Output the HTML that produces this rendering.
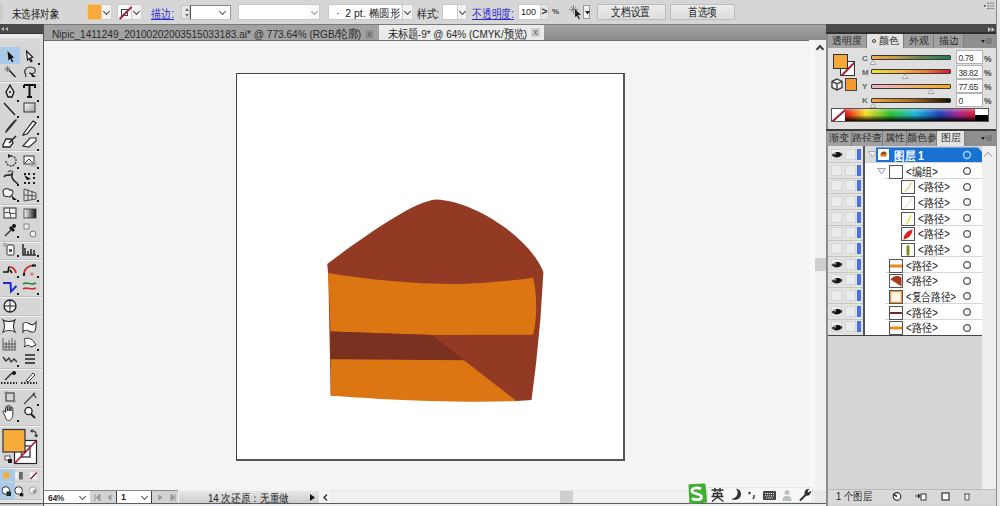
<!DOCTYPE html>
<html><head><meta charset="utf-8">
<style>
*{margin:0;padding:0;box-sizing:border-box}
html,body{width:1000px;height:506px;overflow:hidden;background:#d6d6d6;font-family:"Liberation Sans",sans-serif;font-size:11px;color:#222}
.a{position:absolute}
#top{left:0;top:0;width:1000px;height:24px;background:#d6d6d6}
#tools{left:0;top:24px;width:44px;height:482px;background:#d6d6d6}
#tabs{left:44px;top:24px;width:782px;height:17px;background:linear-gradient(#7a7a7a 0,#7a7a7a 1px,#a2a2a2 1px,#8a8a8a 16px,#6e6e6e 16px)}
#canvas{left:44px;top:41px;width:771px;height:449px;background:#f4f4f4}
#vscroll{left:815px;top:40px;width:11px;height:450px;background:#f0f0f0}
#bottom{left:44px;top:490px;width:782px;height:14px;background:#f0f0f0}
#panel{left:0;top:0;width:0;height:0}
#rstrip{left:996px;top:0;width:4px;height:506px;background:#e6e9ec;border-left:1.2px solid #8a8a8a}
.dd{background:#f2f2f2;border:1px solid #cfcfcf;border-left:none}
.dd:after{content:"";position:absolute;left:2px;top:4px;width:4px;height:4px;border-right:1.5px solid #444;border-bottom:1.5px solid #444;transform:rotate(45deg)}
.chev{width:5px;height:5px;border-right:1.5px solid #555;border-bottom:1.5px solid #555;transform:rotate(45deg)}
.lnk{font-size:12px;color:#2a2ad0}
.lnk span{text-decoration:underline}
.btn{height:16px;background:linear-gradient(#ececec,#dcdcdc);border:1px solid #bdbdbd;text-align:center;font-size:12px;line-height:14px;color:#222}
.xb{width:9px;height:9px;font-size:9px;line-height:9px;text-align:center;color:#555}
.xb:after{content:"x"}
.ptab{height:14px;background:#a0a0a0;border-right:1px solid #7e7e7e;font-size:10px;color:#2a2a2a;text-align:center;line-height:14px;white-space:nowrap;overflow:hidden}
.ptab.act{background:#e4e4e4}
.cell{width:11px;height:11px;background:#ebebeb;border:1px solid #d6d6d6}
.slab{font-size:8px;color:#666;font-weight:bold}
.sbar{width:80px;height:5px;border:1px solid #3a3a3a;border-radius:1px}
.sinp{width:27px;height:14px;background:#fff;border:1px solid #b4b4b4;font-size:8.5px;color:#333;padding:2px 0 0 2px;letter-spacing:-0.4px;overflow:hidden;white-space:nowrap}
.spct{font-size:8.5px;color:#444;font-weight:bold}
.cj{display:inline-block;width:1em;text-align:center}
.tofu .cj{position:relative;top:0.06em;transform:scale(1.4,1.12)}
</style></head><body>
<div id="top" class="a">
 <div class="a" style="left:0;top:4px;width:3px;height:16px;background:#cbcbcb"></div>
 <div class="a" style="left:12px;top:6px;font-size:12px;color:#1a1a1a"><span class="fit" style="--w:47px">未选择对象</span></div>
 <div class="a" style="left:87px;top:4px;width:15px;height:16px;background:#f7ab3c;border:1px solid #f0c890"></div>
 <div class="a dd" style="left:102px;top:4px;width:10px;height:16px"></div>
 <div class="a" style="left:117px;top:4px;width:15px;height:16px;background:#fafafa;border:1px solid #ccc">
   <div class="a" style="left:3px;top:4px;width:7px;height:7px;border:1px solid #444"></div>
   <div class="a" style="left:-1px;top:7px;width:17px;height:1.5px;background:#9a1c3c;transform:rotate(-45deg)"></div>
 </div>
 <div class="a dd" style="left:132px;top:4px;width:10px;height:16px"></div>
 <div class="a lnk" style="left:151px;top:6px"><span class="fit" style="--w:23px">描边:</span></div>
 <div class="a" style="left:181px;top:5px;width:9px;height:14px;background:#e8e8e8;border:1px solid #c8c8c8;"><svg class="a" style="left:2.5px;top:2px" width="4" height="3"><path d="M0,3 L2,0 L4,3 Z" fill="#777"/></svg><svg class="a" style="left:2.5px;top:8px" width="4" height="3"><path d="M0,0 L2,3 L4,0 Z" fill="#777"/></svg></div>
 <div class="a" style="left:190px;top:5px;width:41px;height:14.5px;background:#fff;border:1px solid #c4c4c4;border-left:1px solid #555;border-top-color:#888;border-right-color:#999"></div>
 <div class="a chev" style="left:220px;top:8.5px"></div>
 <div class="a" style="left:238px;top:4px;width:82px;height:16px;background:#fff;border:1px solid #c8c8c8"></div>
 <div class="a dd" style="left:310px;top:4px;width:10px;height:16px;opacity:.5"></div>
 <div class="a" style="left:328px;top:4px;width:75px;height:16px;background:#fff;border:1px solid #c8c8c8;font-size:11px;padding:1px 0 0 7px;white-space:nowrap;color:#222"><span class="fit" style="--w:64px">·&nbsp;&nbsp;2 pt. 椭圆形</span></div>
 <div class="a dd" style="left:403px;top:4px;width:10px;height:16px"></div>
 <div class="a" style="left:417px;top:6px;font-size:12px;color:#222"><span class="fit" style="--w:22px">样式:</span></div>
 <div class="a" style="left:442px;top:4px;width:16px;height:16px;background:#fff;border:1px solid #c8c8c8"></div>
 <div class="a dd" style="left:458px;top:4px;width:9px;height:16px"></div>
 <div class="a lnk" style="left:472px;top:6px"><span class="fit" style="--w:42px">不透明度:</span></div>
 <div class="a" style="left:518px;top:4px;width:23px;height:16px;background:#fff;border:1px solid #c8c8c8;font-size:9px;padding:2px 0 0 2px">100</div>
 <div class="a" style="left:540px;top:4px;width:9px;height:16px;background:#e4e4e4;border:1px solid #c8c8c8;font-size:10px;text-align:center;line-height:14px;font-weight:bold;color:#333">&gt;</div>
 <div class="a" style="left:552px;top:7px;font-size:8px;font-weight:bold;color:#444">%</div>
 <svg class="a" style="left:568px;top:4px" width="16" height="16" viewBox="0 0 16 16"><path d="M3,3 L8,7 M8,3 L3,8 M1,5.5 L10,5.5 M5.5,1 L5.5,10" stroke="#888" stroke-width="1"/><path d="M7,5 L13,11 L10,11 L12,15 L11,15.5 L9,12 L7,13 Z" fill="#222"/></svg>
 <div class="a" style="left:583px;top:5px;width:7px;height:14px;background:#f4f4f4;border:1px solid #999;"><svg class="a" style="left:1px;top:5px" width="5" height="4"><path d="M0,0 L2.5,3.5 L5,0 Z" fill="#222"/></svg></div>
 <div class="a btn" style="left:597px;top:4px;width:69px;text-align:left;padding-left:13px"><span class="fit" style="--w:39px">文档设置</span></div>
 <div class="a btn" style="left:670px;top:4px;width:65px;text-align:left;padding-left:17px"><span class="fit" style="--w:29px">首选项</span></div>
 <svg class="a" style="left:984px;top:1px" width="12" height="9"><rect x="0" y="4" width="1.6" height="1.6" fill="#444"/><path d="M3,2.2 L10,2.2 M3,5 L10,5 M3,7.6 L10,7.6" stroke="#777" stroke-width="1" stroke-dasharray="2,0.6"/></svg>
</div>
<div id="tools" class="a">
<svg class="a" style="left:0;top:0" width="44" height="482" viewBox="0 24 44 482">
<rect x="0" y="24" width="44" height="10" fill="#4a4a4a"/>
<rect x="0" y="33" width="44" height="1" fill="#333"/>
<path d="M4,27 L1,29 L4,31 Z M8,27 L5,29 L8,31 Z" fill="#bbb"/>
<rect x="0" y="34" width="43" height="4" fill="#ececec"/>
<rect x="0" y="38" width="43" height="3" fill="#dadada"/>
<rect x="40" y="34" width="3" height="472" fill="#dedede"/>
<rect x="43" y="24" width="1" height="482" fill="#555"/>
<g fill="#c2c2c2">
<rect x="0" y="81" width="42" height="1"/><rect x="0" y="150" width="42" height="1"/><rect x="0" y="204" width="42" height="1"/>
<rect x="0" y="241" width="42" height="1"/><rect x="0" y="259" width="42" height="1"/><rect x="0" y="296" width="42" height="1"/>
<rect x="0" y="315" width="42" height="1"/><rect x="0" y="368" width="42" height="1"/><rect x="0" y="388" width="42" height="1"/>
<rect x="0" y="425" width="42" height="1"/><rect x="0" y="467" width="42" height="1"/><rect x="0" y="481.8" width="42" height="1"/>
</g>
<g fill="#f0f0f0">
<rect x="0" y="82" width="42" height="1"/><rect x="0" y="151" width="42" height="1"/><rect x="0" y="205" width="42" height="1"/>
<rect x="0" y="242" width="42" height="1"/><rect x="0" y="260" width="42" height="1"/><rect x="0" y="297" width="42" height="1"/>
<rect x="0" y="316" width="42" height="1"/><rect x="0" y="369" width="42" height="1"/><rect x="0" y="389" width="42" height="1"/>
<rect x="0" y="426" width="42" height="1"/><rect x="0" y="468" width="42" height="1"/><rect x="0" y="482.8" width="42" height="0.8"/>
</g>
<rect x="0" y="47" width="20" height="17" fill="#a9cbe9"/>
<g fill="#1a1a1a">
<!-- flyout dots -->
<rect x="17" y="100" width="2" height="2"/><rect x="37" y="100" width="2" height="2"/>
<rect x="17" y="116" width="2" height="2"/><rect x="37" y="116" width="2" height="2"/>
<rect x="37" y="133" width="2" height="2"/><rect x="37" y="149" width="2" height="2"/>
<rect x="38" y="63" width="2" height="2"/>
<rect x="17" y="167" width="2" height="2"/><rect x="37" y="167" width="2" height="2"/>
<rect x="17" y="184" width="2" height="2"/><rect x="17" y="200" width="2" height="2"/><rect x="37" y="200" width="2" height="2"/>
<rect x="17" y="236" width="2" height="2"/><rect x="17" y="255" width="2" height="2"/><rect x="37" y="255" width="2" height="2"/>
<rect x="17" y="276" width="2" height="2"/><rect x="37" y="276" width="2" height="2"/><rect x="17" y="293" width="2" height="2"/><rect x="37" y="293" width="2" height="2"/>
<rect x="37" y="349" width="2" height="2"/><rect x="17" y="365" width="2" height="2"/>
<rect x="37" y="404" width="2" height="2"/><rect x="17" y="420" width="2" height="2"/>
</g>
<!-- select -->
<path d="M7.5,51 L8.5,60.5 L10.3,58.8 L12,62.3 L13.3,61.6 L11.6,58.2 L14,57.6 Z" fill="#111"/>
<path d="M26.5,51 L27.5,60 L29.2,58.4 L30.8,61.8 L32,61.2 L30.5,57.8 L32.8,57.3 Z" fill="#fff" stroke="#111" stroke-width="1.1"/>
<!-- magic wand -->
<path d="M9,70 L15.5,77" stroke="#222" stroke-width="1.5"/><path d="M4.5,69 L10.5,69 M7.5,66 L7.5,72 M5.5,67 L9.5,71 M9.5,67 L5.5,71" stroke="#666" stroke-width="0.8"/>
<!-- lasso -->
<path d="M26,75 C23,71 26,67 30,67 C34,67 36,69 35,72 C34,74 31,74 29,73 M26,75 L25.5,77" fill="none" stroke="#333" stroke-width="1.2"/>
<path d="M30,72 L36,77 L32,77 Z" fill="#222"/>
<!-- pen -->
<path d="M10,85 L6,92 L8,97 L12,97 L14,92 Z" fill="#ddd" stroke="#111" stroke-width="1.3"/><circle cx="10" cy="92" r="1" fill="#111"/>
<!-- T -->
<path d="M24,85 L35,85 L35,88 M24,85 L24,88 M29.5,85 L29.5,97 M27,97 L32,97" fill="none" stroke="#111" stroke-width="2"/>
<!-- line -->
<path d="M4,103 L15,115" stroke="#222" stroke-width="1.5"/>
<!-- rect -->
<rect x="24" y="103" width="11" height="9" fill="url(#gr1)" stroke="#333" stroke-width="1"/>
<defs><linearGradient id="gr1" x1="0" y1="0" x2="1" y2="1"><stop offset="0" stop-color="#fff"/><stop offset="1" stop-color="#999"/></linearGradient>
<linearGradient id="gr2" x1="0" y1="0" x2="1" y2="0"><stop offset="0" stop-color="#fff"/><stop offset="1" stop-color="#111"/></linearGradient></defs>
<!-- brush -->
<path d="M5,132 C7,128 12,122 16,119 L17,120 C14,124 9,130 6,133 Z" fill="#333"/>
<path d="M24,133 L33,121 L36,123 L27,134 L23,135 Z" fill="#fff" stroke="#222" stroke-width="1.2"/>
<!-- blob -->
<path d="M3,145 L6,139 L11,139 L13,143 L10,147 L3,147 Z" fill="#fff" stroke="#222" stroke-width="1.3"/><path d="M9,143 L16,136" stroke="#222" stroke-width="1.6"/>
<!-- eraser -->
<path d="M23,146 L30,138 L36,138 L36,141 L29,147 Z" fill="#fff" stroke="#333" stroke-width="1.2"/>
<!-- rotate -->
<path d="M6,161 A5,5 0 1 0 10,156" fill="none" stroke="#555" stroke-width="1.6" stroke-dasharray="2,1"/><path d="M8,154 L12,156 L8,158 Z" fill="#222"/>
<!-- scale -->
<rect x="24" y="156" width="10" height="8" fill="#f4f4f4" stroke="#333"/><path d="M25,163 L29,159 L33,163" fill="none" stroke="#333"/><rect x="31" y="162" width="5" height="4" fill="none" stroke="#aaa"/>
<!-- warp -->
<path d="M4,177 C6,173 9,177 12,174 C11,179 14,181 18,184" fill="none" stroke="#333" stroke-width="1.8"/><path d="M8,172 C10,170 12,171 13,172" fill="none" stroke="#555" stroke-width="1.3"/>
<!-- free transform -->
<g fill="#222"><rect x="24" y="173" width="2" height="2"/><rect x="28" y="173" width="2" height="2"/><rect x="33" y="173" width="2" height="2"/><rect x="33" y="177" width="2" height="2"/><rect x="33" y="182" width="2" height="2"/><rect x="28" y="182" width="2" height="2"/><rect x="24" y="182" width="2" height="2"/></g><path d="M24,175 L31,179 L27,180 Z" fill="#111"/>
<!-- shape builder -->
<path d="M3,192 C3,188 8,188 10,190 C13,189 14,193 12,195 L10,197 L4,196 Z" fill="#f4f4f4" stroke="#333" stroke-width="1.1"/><path d="M11,195 L17,200 L13,200 Z" fill="#222"/>
<!-- perspective grid -->
<path d="M24,189 L24,201 L36,199 L36,193 Z M28,189.5 L28,200.5 M32,191 L32,199.8 M24,195 L36,196" fill="#ddd" stroke="#444" stroke-width="0.9"/>
<!-- mesh -->
<rect x="4" y="208" width="12" height="10" fill="#f0f0f0" stroke="#333"/><path d="M4,213 C8,211 12,215 16,213 M10,208 C8,212 12,214 10,218" fill="none" stroke="#444"/>
<!-- gradient -->
<rect x="24" y="209" width="12" height="9" fill="url(#gr2)" stroke="#333" stroke-width="0.8"/>
<!-- eyedropper -->
<path d="M5,236 L12,229" stroke="#333" stroke-width="1.4"/><path d="M11,226 L15,230 L13,232 L9,228 Z" fill="#111"/><circle cx="14" cy="226" r="2" fill="#111"/>
<!-- blend -->
<rect x="24" y="224" width="5" height="5" fill="#eee" stroke="#888"/><circle cx="33" cy="234" r="3" fill="#eee" stroke="#777"/>
<!-- symbol sprayer -->
<rect x="7" y="245" width="7" height="10" rx="1" fill="#fff" stroke="#333"/><path d="M3,245 L6,246 M3,243 L7,244" stroke="#777" stroke-width="0.8"/><rect x="9" y="249" width="3" height="3" fill="#555"/>
<!-- graph -->
<path d="M23,244 L23,255 L36,255 M25,255 L25,248 M28,255 L28,251 M31,255 L31,249 M34,255 L34,250" fill="none" stroke="#333" stroke-width="1.6"/>
<!-- width tool -->
<path d="M9.5,267 C12,267 15,269 16,273" fill="none" stroke="#d03030" stroke-width="1.8"/><path d="M3,272 L8,272 L9,266.5 M10,270 L12,273" fill="none" stroke="#111" stroke-width="1.6"/>
<!-- red curve -->
<path d="M24,275 C24,269 28,265.5 34,265.5" fill="none" stroke="#d03030" stroke-width="1.8"/><path d="M32,265.5 L36,265.5 M24,273 L24,276" stroke="#111" stroke-width="1.8"/><path d="M32,272 L32,276 M30,274 L34,274" stroke="#e05a5a" stroke-width="0.9"/>
<!-- blue Z -->
<path d="M3,283 L10.5,283 L11,291.5 L16.5,286" fill="none" stroke="#1a2ad8" stroke-width="2"/>
<!-- green/red waves -->
<path d="M23,284 C27,281 31,286 36,283" fill="none" stroke="#2a8a3a" stroke-width="1.6"/><path d="M23,289 C27,286 31,291 36,288" fill="none" stroke="#c83434" stroke-width="1.6"/>
<!-- circle crosshair -->
<circle cx="10" cy="306" r="6" fill="#f4f4f4" stroke="#222" stroke-width="1.3"/><path d="M4,306 L16,306 M10,300 L10,312" stroke="#222" stroke-width="1"/>
<!-- envelope -->
<path d="M3,320 C6,322 12,322 15,320 C13,324 13,328 15,332 C12,330 6,330 3,332 C5,328 5,324 3,320 Z" fill="#fff" stroke="#333" stroke-width="1.1"/>
<path d="M23,324 C27,318 31,330 36,322 C36,327 36,329 35,331 C31,336 27,326 23,332 Z" fill="#fff" stroke="#333" stroke-width="1.1"/>
<!-- grid chart -->
<path d="M3,338 L3,350 L16,350 M6,350 L6,342 M9,350 L9,340 M12,350 L12,338 M15,350 L15,340 M3,344 L16,344 M3,347 L16,347" fill="none" stroke="#444" stroke-width="0.8"/>
<!-- puppet -->
<path d="M24,339 C28,337 32,339 34,342 L36,345 L31,347 L28,345 L24,347 C26,344 25,341 24,339 Z" fill="#fff" stroke="#333" stroke-width="1"/>
<!-- wavy -->
<path d="M3,357 L6,361 L9,358 L11,362 L14,359 L17,362" fill="none" stroke="#333" stroke-width="1.3"/>
<!-- list -->
<path d="M25,355 L35,355 M25,359 L35,359 M25,363 L35,363" stroke="#222" stroke-width="1.6"/>
<!-- eyedropper bars -->
<path d="M5,380 L12,373" stroke="#333" stroke-width="1.5"/><circle cx="14" cy="373" r="2" fill="#111"/><path d="M1,383 L17,383" stroke="#222" stroke-width="2" stroke-dasharray="1.5,1.5"/>
<path d="M26,381 L33,373 L35,375 L28,382 Z" fill="#fff" stroke="#333"/><path d="M21,383 L37,383" stroke="#222" stroke-width="2" stroke-dasharray="1.5,1.5"/>
<!-- artboard -->
<rect x="6" y="393" width="8" height="8" fill="none" stroke="#444" stroke-width="1.2"/><path d="M6,391 L6,393 M14,401 L14,403 M4,393 L6,393 M14,401 L16,401" stroke="#888"/>
<!-- slice -->
<path d="M24,404 L35,393 M28,400 L32,396 M33,393 L36,398" fill="none" stroke="#444" stroke-width="1.3"/>
<!-- hand -->
<path d="M5,416 L3,412 C2.5,411 3.5,410 4.5,411 L5.5,412.5 L5.5,407.5 C5.5,406.3 7.3,406.3 7.3,407.5 L7.3,411 L7.3,406.3 C7.3,405 9.2,405 9.2,406.3 L9.2,411 L9.2,406.8 C9.2,405.6 11,405.6 11,406.8 L11,411 L11,408.2 C11,407 12.8,407 12.8,408.2 L12.8,414 C12.8,418 11,420.5 8.5,420.5 C6.5,420.5 5.8,418.5 5,416 Z" fill="#fff" stroke="#222" stroke-width="0.9"/>
<!-- zoom -->
<circle cx="28.5" cy="411" r="3.6" fill="#fff" stroke="#222" stroke-width="1.3"/><path d="M31,414 L35,418" stroke="#222" stroke-width="2"/>
<!-- fill/stroke -->
<path d="M31.5,431 C34.5,430.5 36,432 36.2,435" fill="none" stroke="#333" stroke-width="1.2"/><path d="M30,431 L32.5,429 L32.5,433 Z M36.2,437.5 L34,435 L38.4,435 Z" fill="#333"/>
<rect x="14.5" y="440.5" width="22" height="23" fill="#fff" stroke="#222" stroke-width="1.2"/>
<rect x="21.5" y="446" width="8.5" height="11" fill="none" stroke="#555" stroke-width="1.6"/>
<path d="M15,463 L36,441" stroke="#b01c40" stroke-width="1.8"/>
<rect x="3" y="429.5" width="22" height="22.5" fill="#f7ac3b" stroke="#333" stroke-width="1.2"/>
<rect x="5" y="456" width="5" height="4" fill="#fff" stroke="#333" stroke-width="0.8"/><rect x="8" y="459" width="4" height="4" fill="#222"/>
<rect x="0" y="469" width="15" height="12.5" fill="#a9cbe9"/>
<rect x="3" y="472.3" width="6.3" height="6.3" rx="1" fill="#f7ac3b"/>
<rect x="15.5" y="472" width="7.5" height="7.5" fill="url(#gr3)"/>
<rect x="29.7" y="472" width="7.7" height="7.5" fill="#fff" stroke="#e0c8d0" stroke-width="0.5"/><path d="M30.5,479 L36.8,472.5" stroke="#7a1838" stroke-width="1.5"/>
<rect x="0" y="482.5" width="15" height="16.5" fill="#a9cbe9"/>
<circle cx="5.8" cy="490.5" r="3.8" fill="#fff" stroke="#333" stroke-width="1"/><rect x="6.5" y="491.5" width="4.5" height="4.5" fill="#1e2e2e"/>
<circle cx="18.6" cy="490.5" r="3.8" fill="#fff" stroke="#333" stroke-width="1"/><path d="M20.5,493 L23.5,493.5 L23,496.5 L19.5,496 Z" fill="#111"/>
<circle cx="32.8" cy="490.5" r="3.6" fill="#f0f0f0" stroke="#aaa" stroke-width="1"/><path d="M32.8,490.5 L36,489 A3.6,3.6 0 0 1 33,494 Z" fill="#999"/>
<rect x="0" y="499" width="42" height="1" fill="#c2c2c2"/><rect x="0" y="500" width="43" height="3" fill="#e6e6e6"/><rect x="0" y="503" width="44" height="1.2" fill="#555"/>
<defs><linearGradient id="gr3" x1="0" y1="0" x2="1" y2="0"><stop offset="0" stop-color="#fff"/><stop offset="0.45" stop-color="#ddd"/><stop offset="0.55" stop-color="#555"/><stop offset="1" stop-color="#888"/></linearGradient></defs>
</svg>
</div>
<div id="tabs" class="a">
 <div class="a" style="left:0;top:1px;width:335px;height:15px;background:#a2a2a2;font-size:11.5px;color:#2a2a2a;padding:2px 0 0 8px;white-space:nowrap;overflow:hidden"><span class="fit" style="--w:309px">Nipic_1411249_20100202003515033183.ai* @ 773.64% (RGB/轮廓)</span></div>
 <div class="a xb" style="left:321px;top:6px;background:#939393"></div>
 <div class="a" style="left:335px;top:1px;width:165px;height:15px;background:#ebebeb;font-size:11.5px;color:#2a2a2a;padding:2px 0 0 9px;white-space:nowrap;overflow:hidden"><span class="fit" style="--w:139px">未标题-9* @ 64% (CMYK/预览)</span></div>
 <div class="a xb" style="left:487px;top:4px;background:#cfcfcf"></div>
</div>
<div id="canvas" class="a">
  <div class="a" style="left:192px;top:32px;width:389px;height:388px;background:#fff;border:1px solid #464646;border-right:2px solid #555;border-bottom:2px solid #555"></div>
</div>
<svg class="a" style="left:0;top:0" width="1000" height="506" viewBox="0 0 1000 506">
<path fill="#933a25" d="M327.2,264 C370,232 415,201 436,199.5 C475,201 530,238 543.4,272 L540.4,319 L536,364 L531.5,400 L517,401 L330.7,395.6 L328.3,274 Z"/>
<path fill="#dc7613" d="M328.3,273 C370,280 420,284.5 460,284 C495,283 520,279.5 533,277.8 C537,292 537.5,318 533,334.7 L433,334.9 L330.5,331.6 Z"/>
<path fill="#7b3120" d="M330.5,331.6 L431.9,334.9 L464,360.2 L330.6,359.3 Z"/>
<path fill="#dc7613" d="M330.6,359.3 L464,360.2 L516.7,401.2 C470,402.5 420,401 380,399 C355,397.5 340,396.5 330.7,395.6 Z"/>
</svg>
<div id="vscroll" class="a">
 <div class="a" style="left:2px;top:6px;width:6px;height:6px;border-left:2px solid #444;border-top:2px solid #444;transform:rotate(45deg)"></div>
 <div class="a" style="left:0;top:218px;width:11px;height:13px;background:#cfcfcf"></div>
</div>
<div class="a" style="left:809px;top:40px;width:6px;height:450px;background:#f7f7f7"></div>
<div id="bottom" class="a">
 <div class="a" style="left:0;top:0;width:134px;height:1px;background:#8a8a8a"></div><div class="a" style="left:286px;top:0;width:485px;height:1px;background:#e6e6e6"></div>
 <div class="a" style="left:0;top:12.5px;width:782px;height:1.2px;background:#5e5e5e"></div>
 <div class="a" style="left:0;top:1px;width:46px;height:12px;background:#fff;font-size:8.5px;font-weight:bold;color:#333;padding:2px 0 0 4px;letter-spacing:-0.3px">64%</div>
 <div class="a chev" style="left:36px;top:4px;border-color:#555;width:5px;height:5px"></div>
 <div class="a" style="left:46px;top:1px;width:26px;height:12px;background:#d2d2d2"></div>
 <svg class="a" style="left:48px;top:3px" width="24" height="9"><path d="M3,1 L3,8 M8,1 L4.5,4.5 L8,8 Z M19,2 L16,4.5 L19,7 Z" stroke="#999" fill="#999" stroke-width="1"/></svg>
 <div class="a" style="left:72px;top:1px;width:36px;height:12px;background:#fff;border-left:1px solid #444;border-right:1px solid #444;font-size:9px;font-weight:bold;color:#222;padding:1px 0 0 4px">1</div>
 <div class="a chev" style="left:98px;top:4px;border-color:#555;width:5px;height:5px"></div>
 <div class="a" style="left:108px;top:1px;width:26px;height:12px;background:#d2d2d2"></div>
 <svg class="a" style="left:110px;top:3px" width="24" height="9"><path d="M5,2 L8,4.5 L5,7 Z M17,1 L20.5,4.5 L17,8 Z M21,1 L21,8" stroke="#999" fill="#999" stroke-width="1"/></svg>
 <div class="a" style="left:134px;top:1px;width:141px;height:12px;background:linear-gradient(#e6e6e6,#cdcdcd);border-left:1px solid #f6f6f6"></div>
 <div class="a" style="left:164px;top:1px;font-size:11px;color:#1a1a1a;white-space:nowrap"><span class="fit" style="--w:81px">14 次还原：无重做</span></div>
 <svg class="a" style="left:265px;top:3px" width="7" height="9"><path d="M1,1 L6,4.5 L1,8 Z" fill="#111"/></svg>
 <div class="a" style="left:275px;top:1px;width:11px;height:12px;background:#f4f4f4"></div>
 <svg class="a" style="left:278px;top:3px" width="7" height="9"><path d="M5,1.5 L2,4.5 L5,7.5" stroke="#333" stroke-width="1.4" fill="none"/></svg>
 <div class="a" style="left:286px;top:1px;width:485px;height:12px;background:#f0f0f0"></div>
 <div class="a" style="left:516px;top:1px;width:13px;height:12px;background:#cfcfcf"></div>
 <div class="a" style="left:771px;top:1px;width:11px;height:12px;background:#e8e8e8"></div>
</div>
<div class="a" style="left:44px;top:504px;width:782px;height:2px;background:#eef1f4"></div>
<!-- sogou ime -->
<div class="a" style="left:707px;top:487px;width:106px;height:16px;background:#f7f7f7;border:1px solid #e4e4e4"></div>
<svg class="a" style="left:684px;top:483px" width="130" height="23" viewBox="684 483 130 23">
 <path d="M688.5,485.5 Q688,484.5 689.5,484.3 L704,483.6 Q705.5,483.5 705.6,485 L707,501 Q707.2,502.5 705.7,502.7 L691,504 Q689.5,504.2 689.4,502.7 Z" fill="#3fae33"/>
 <path d="M701,489 C697,487 691,488 692,491.5 C693,494 701,493.5 701.5,497 C702,500 695,500.5 692,498.5" fill="none" stroke="#fff" stroke-width="2.8"/>
 <path d="M711.5,490 L723.5,490 M715,488 L715,492 M720,488 L720,492 M713.5,497 L713.5,493.5 L721.5,493.5 L721.5,497 M711.5,496.5 L723.5,496.5 M717.5,491.5 L717.5,497 M717.5,497 L712,501.5 M717.5,497 L723.5,501.5" stroke="#333" stroke-width="1.5" fill="none"/>
 <path d="M736,488.5 C739,492 738,498 731,499 C735,501 741,499.5 741,494 C741,491 739,489 736,488.5 Z" fill="#333"/>
 <circle cx="749.5" cy="493" r="1.2" fill="#333"/><path d="M754,495 L754,497 L753,499" stroke="#333" stroke-width="1.4" fill="none"/>
 <rect x="763" y="491" width="13" height="9" rx="1" fill="#444"/><path d="M765,493.5 L774,493.5 M765,495.8 L774,495.8 M766,498 L773,498" stroke="#f0f0f0" stroke-width="1" stroke-dasharray="1.2,0.8"/>
 <circle cx="787" cy="492.5" r="2.5" fill="#b8c4bc"/><path d="M782.5,501 C782.5,497 784,496 787,496 C790,496 791.5,497 791.5,501 Z" fill="#b8c4bc"/>
 <path d="M800,500.5 L805.5,495" stroke="#333" stroke-width="2"/><path d="M805,495.5 C803.5,492 805.5,488.5 809.5,488.8 L807.5,491.2 L808.8,492.5 L811,490.5 C811.3,494.5 808.5,496.5 805,495.5 Z" fill="#333"/>
</svg>
<div id="panel" class="a">
 <div class="a" style="left:826px;top:24px;width:170px;height:10px;background:linear-gradient(#4a4a4a 80%,#2e2e2e 80%)"></div>
 <svg class="a" style="left:987.5px;top:27px" width="7" height="5"><path d="M0,0 L3,2.5 L0,5 Z M3.5,0 L6.5,2.5 L3.5,5 Z" fill="#ccc"/></svg>
 <div class="a" style="left:826px;top:34px;width:170px;height:14px;background:#8f8f8f"></div>
 <div class="a ptab" style="left:827px;top:34px;width:40px">透明度</div>
 <div class="a ptab act" style="left:867px;top:34px;width:37px"><span style="display:inline-block;width:4px;height:4px;border:1px solid #444;border-radius:50%;margin-right:3px;vertical-align:1px"></span>颜色</div>
 <div class="a ptab" style="left:904px;top:34px;width:30px">外观</div>
 <div class="a ptab" style="left:934px;top:34px;width:30px">描边</div>
 <svg class="a" style="left:981px;top:40px" width="4" height="3"><path d="M0,0 L4,0 L2,3 Z" fill="#222"/></svg><div class="a" style="left:986px;top:38px;width:6px;height:6px;background:#7a7a7a"></div>
 <div class="a" style="left:826px;top:48px;width:170px;height:80.5px;background:#dfdfdf"></div>
 <div class="a" style="left:826px;top:34px;width:1.5px;height:472px;background:#8c8c8c"></div>
 <!-- swatches -->
 <div class="a" style="left:840px;top:61px;width:15px;height:15px;background:#fff;border:1px solid #333;overflow:hidden"><div class="a" style="left:-3px;top:6px;width:20px;height:1.6px;background:#a8183a;transform:rotate(-45deg)"></div></div>
 <div class="a" style="left:832.5px;top:54px;width:15px;height:15px;background:#f5a93a;border:1px solid #333"></div>
 <svg class="a" style="left:831px;top:78px" width="12" height="13" viewBox="0 0 12 13"><path d="M6,1 L11,3.5 L11,9.5 L6,12 L1,9.5 L1,3.5 Z M1,3.5 L6,6 L11,3.5 M6,6 L6,12" fill="#f4f4f4" stroke="#333" stroke-width="1.3"/></svg>
 <div class="a" style="left:845px;top:78px;width:12px;height:13px;background:#f29a30;border:1px solid #444"></div>
 <!-- sliders -->
 <div class="a slab" style="left:862px;top:53.5px">C</div>
 <div class="a sbar" style="left:871px;top:55px;background:linear-gradient(90deg,#f2a84a,#c49a48 30%,#7a8a50 55%,#1a7a50)"></div>
 <svg class="a" style="left:869px;top:60px" width="8" height="5"><path d="M1,4.5 L4,0.5 L7,4.5 Z" fill="#eee" stroke="#999" stroke-width="0.8"/></svg>
 <div class="a sinp" style="left:955.5px;top:50px">0.78</div><div class="a spct" style="left:984px;top:53.5px">%</div>
 <div class="a slab" style="left:862px;top:67.5px">M</div>
 <div class="a sbar" style="left:871px;top:69px;background:linear-gradient(90deg,#f0e040,#f4b040 40%,#ec7a30 70%,#d81a3a)"></div>
 <svg class="a" style="left:901px;top:74px" width="8" height="5"><path d="M1,4.5 L4,0.5 L7,4.5 Z" fill="#eee" stroke="#999" stroke-width="0.8"/></svg>
 <div class="a sinp" style="left:955.5px;top:64.5px">38.82</div><div class="a spct" style="left:984px;top:67.5px">%</div>
 <div class="a slab" style="left:862px;top:82px">Y</div>
 <div class="a sbar" style="left:871px;top:83.5px;background:linear-gradient(90deg,#f4b0c8,#f4b090 40%,#f4ae50 70%,#f2aa20)"></div>
 <svg class="a" style="left:927px;top:88.5px" width="8" height="5"><path d="M1,4.5 L4,0.5 L7,4.5 Z" fill="#eee" stroke="#999" stroke-width="0.8"/></svg>
 <div class="a sinp" style="left:955.5px;top:78.5px">77.65</div><div class="a spct" style="left:984px;top:81.5px">%</div>
 <div class="a slab" style="left:862px;top:96px">K</div>
 <div class="a sbar" style="left:871px;top:97.5px;background:linear-gradient(90deg,#f5aa40,#b06a20 50%,#4a2a08 85%,#111)"></div>
 <svg class="a" style="left:869px;top:102.5px" width="8" height="5"><path d="M1,4.5 L4,0.5 L7,4.5 Z" fill="#eee" stroke="#999" stroke-width="0.8"/></svg>
 <div class="a sinp" style="left:955.5px;top:93px">0</div><div class="a spct" style="left:984px;top:96px">%</div>
 <!-- spectrum -->
 <div class="a" style="left:831px;top:108px;width:158px;height:14px;border:1px solid #555;background:#000;overflow:hidden">
  <div class="a" style="left:0;top:0;width:13px;height:12px;background:#fff;overflow:hidden"><div class="a" style="left:-3px;top:5.5px;width:19px;height:1.6px;background:#a8183a;transform:rotate(-42deg)"></div></div>
  <div class="a" style="left:13px;top:0;width:130px;height:12px;background:linear-gradient(#fff5 0%,#0000 35%,#0000 50%,#000e 100%),linear-gradient(90deg,#e80a1a,#f07020 8%,#f4e02a 16%,#30c030 35%,#20b8d8 54%,#2040b8 73%,#a02898 86%,#e01838 100%)"></div>
  <div class="a" style="left:143px;top:0;width:13px;height:6px;background:#fff"></div>
 </div>
 <div class="a" style="left:826px;top:128.5px;width:170px;height:2px;background:#3a3a3a"></div>
 <!-- layers tabs -->
 <div class="a" style="left:826px;top:131px;width:170px;height:15px;background:#8f8f8f"></div>
 <div class="a ptab" style="left:827px;top:131px;width:25px;height:15px">渐变</div>
 <div class="a ptab" style="left:852px;top:131px;width:31px;height:15px">路径查</div>
 <div class="a ptab" style="left:883px;top:131px;width:24px;height:15px">属性</div>
 <div class="a ptab" style="left:907px;top:131px;width:30px;height:15px">颜色参</div>
 <div class="a ptab act" style="left:937px;top:131px;width:28px;height:15px">图层</div>
 <svg class="a" style="left:981px;top:137px" width="4" height="3"><path d="M0,0 L4,0 L2,3 Z" fill="#222"/></svg><div class="a" style="left:986px;top:135px;width:6px;height:6px;background:#7a7a7a"></div>
 <!-- layers content -->
 <div class="a" style="left:827.5px;top:146px;width:155.5px;height:343px;background:#d5d5d5"></div>
 <div class="a" style="left:827.5px;top:146px;width:35px;height:189.5px;background:#e2e2e2"></div>
 <div class="a" style="left:862.5px;top:146px;width:2px;height:189.5px;background:#555"></div>
<div class="a" style="left:827.5px;top:161.9px;width:35px;height:1px;background:#c6c6c6"></div><div class="a" style="left:827.5px;top:177.5px;width:35px;height:1px;background:#c6c6c6"></div><div class="a" style="left:827.5px;top:193.2px;width:35px;height:1px;background:#c6c6c6"></div><div class="a" style="left:827.5px;top:208.9px;width:35px;height:1px;background:#c6c6c6"></div><div class="a" style="left:827.5px;top:224.6px;width:35px;height:1px;background:#c6c6c6"></div><div class="a" style="left:827.5px;top:240.2px;width:35px;height:1px;background:#c6c6c6"></div><div class="a" style="left:827.5px;top:255.9px;width:35px;height:1px;background:#c6c6c6"></div><div class="a" style="left:827.5px;top:271.6px;width:35px;height:1px;background:#c6c6c6"></div><div class="a" style="left:827.5px;top:287.2px;width:35px;height:1px;background:#c6c6c6"></div><div class="a" style="left:827.5px;top:302.9px;width:35px;height:1px;background:#c6c6c6"></div><div class="a" style="left:827.5px;top:318.6px;width:35px;height:1px;background:#c6c6c6"></div>
 
 <div class="a cell" style="left:831px;top:148.9px"></div><div class="a cell" style="left:844.5px;top:148.9px"></div>
<svg class="a" style="left:831px;top:150.4px" width="12" height="10" viewBox="0 0 12 10"><path d="M0.5,5 C2.5,2 9,1 11.5,4 C10,8 4,9 0.5,5 Z" fill="#333"/><ellipse cx="6.5" cy="4.5" rx="2.8" ry="2.4" fill="#111"/><ellipse cx="4.2" cy="3.8" rx="1.2" ry="0.8" fill="#bbb"/></svg>
<div class="a" style="left:857px;top:148.9px;width:3.5px;height:11px;background:#4a72e2"></div>
<div class="a" style="left:865px;top:147.4px;width:11px;height:15px;background:#dadada"></div>
<div class="a" style="left:876px;top:147.4px;width:106px;height:15px;background:#1872d2;clip-path:polygon(0 0,96% 0,100% 30%,100% 100%,0 100%)"></div>
<svg class="a" style="left:868px;top:151.4px" width="9" height="7"><path d="M0.5,0.5 L8.5,0.5 L4.5,6 Z" fill="#f2f2f2" stroke="#999" stroke-width="0.8"/></svg>
<svg class="a" style="left:878px;top:149.0px" width="11" height="11" viewBox="0 0 11 11"><rect x="0" y="0" width="11" height="11" fill="#fff"/><rect x="1" y="1" width="9" height="9" fill="#fff"/><path d="M2.5,7.5 L2.5,5 C3.5,3.5 5,2.5 6,2.5 C7.5,2.5 8.5,4 8.5,5 L8.5,7.5 Z" fill="#dc7613"/><path d="M2.5,5 C3.5,3.5 5,2.5 6,2.5 C7.5,2.5 8.5,4 8.5,5 Z" fill="#933a25"/></svg>
<div class="a" style="left:894px;top:147.9px;font-size:12px;font-weight:bold;color:#fff;white-space:nowrap"><span class="fit" style="--w:30px">图层 1</span></div>
<svg class="a" style="left:962px;top:149.9px" width="10" height="10"><circle cx="5" cy="5" r="3.5" fill="none" stroke="#9fd4ff" stroke-width="1.4"/></svg>
<div class="a cell" style="left:831px;top:164.6px"></div><div class="a cell" style="left:844.5px;top:164.6px"></div>
<div class="a" style="left:857px;top:164.6px;width:3.5px;height:11px;background:#4a72e2"></div>
<div class="a" style="left:865px;top:163.1px;width:117px;height:15.67px;background:#fff"></div>
<div class="a" style="left:885px;top:178.1px;width:97px;height:1px;background:#d6d6d6"></div>
<svg class="a" style="left:877px;top:168.1px" width="9" height="7"><path d="M0.5,0.5 L8.5,0.5 L4.5,6 Z" fill="#f4f4f4" stroke="#8a9ab0" stroke-width="0.9"/></svg>
<svg class="a" style="left:889px;top:164.6px" width="14" height="14" viewBox="-0.5 -0.5 14 14"><rect x="0" y="0" width="13" height="13" fill="#fff"/><rect x="0" y="0" width="13" height="13" fill="none" stroke="#555" stroke-width="1.1"/></svg>
<div class="a" style="left:906px;top:163.6px;font-size:12px;color:#222;white-space:nowrap"><span class="fit" style="--w:32px"><编组></span></div>
<svg class="a" style="left:962px;top:165.9px" width="10" height="10"><circle cx="5" cy="5" r="3.4" fill="none" stroke="#5a5a5a" stroke-width="1.3"/></svg>
<div class="a cell" style="left:831px;top:180.2px"></div><div class="a cell" style="left:844.5px;top:180.2px"></div>
<div class="a" style="left:857px;top:180.2px;width:3.5px;height:11px;background:#4a72e2"></div>
<div class="a" style="left:865px;top:178.7px;width:117px;height:15.67px;background:#fff"></div>
<div class="a" style="left:901px;top:193.7px;width:81px;height:1px;background:#d6d6d6"></div>
<svg class="a" style="left:901px;top:180.2px" width="14" height="14" viewBox="-0.5 -0.5 14 14"><rect x="0" y="0" width="13" height="13" fill="#fff"/><path d="M3,11 C6,9 9,5 10,2" stroke="#d9d27a" stroke-width="1.2" fill="none"/><rect x="0" y="0" width="13" height="13" fill="none" stroke="#555" stroke-width="1.1"/></svg>
<div class="a" style="left:918px;top:179.2px;font-size:12px;color:#222;white-space:nowrap"><span class="fit" style="--w:32px"><路径></span></div>
<svg class="a" style="left:962px;top:181.5px" width="10" height="10"><circle cx="5" cy="5" r="3.4" fill="none" stroke="#5a5a5a" stroke-width="1.3"/></svg>
<div class="a cell" style="left:831px;top:195.9px"></div><div class="a cell" style="left:844.5px;top:195.9px"></div>
<div class="a" style="left:857px;top:195.9px;width:3.5px;height:11px;background:#4a72e2"></div>
<div class="a" style="left:865px;top:194.4px;width:117px;height:15.67px;background:#fff"></div>
<div class="a" style="left:901px;top:209.4px;width:81px;height:1px;background:#d6d6d6"></div>
<svg class="a" style="left:901px;top:195.9px" width="14" height="14" viewBox="-0.5 -0.5 14 14"><rect x="0" y="0" width="13" height="13" fill="#fff"/><path d="M3,11 C6,9 9,5 10,2" stroke="#e0dc9a" stroke-width="1" fill="none"/><rect x="0" y="0" width="13" height="13" fill="none" stroke="#555" stroke-width="1.1"/></svg>
<div class="a" style="left:918px;top:194.9px;font-size:12px;color:#222;white-space:nowrap"><span class="fit" style="--w:32px"><路径></span></div>
<svg class="a" style="left:962px;top:197.2px" width="10" height="10"><circle cx="5" cy="5" r="3.4" fill="none" stroke="#5a5a5a" stroke-width="1.3"/></svg>
<div class="a cell" style="left:831px;top:211.6px"></div><div class="a cell" style="left:844.5px;top:211.6px"></div>
<div class="a" style="left:857px;top:211.6px;width:3.5px;height:11px;background:#4a72e2"></div>
<div class="a" style="left:865px;top:210.1px;width:117px;height:15.67px;background:#fff"></div>
<div class="a" style="left:901px;top:225.1px;width:81px;height:1px;background:#d6d6d6"></div>
<svg class="a" style="left:901px;top:211.6px" width="14" height="14" viewBox="-0.5 -0.5 14 14"><rect x="0" y="0" width="13" height="13" fill="#fff"/><path d="M4,12 C6,9 8,5 9,2 L10,3 C9,7 7,10 5,12 Z" fill="#e6e02a"/><rect x="0" y="0" width="13" height="13" fill="none" stroke="#555" stroke-width="1.1"/></svg>
<div class="a" style="left:918px;top:210.6px;font-size:12px;color:#222;white-space:nowrap"><span class="fit" style="--w:32px"><路径></span></div>
<svg class="a" style="left:962px;top:212.9px" width="10" height="10"><circle cx="5" cy="5" r="3.4" fill="none" stroke="#5a5a5a" stroke-width="1.3"/></svg>
<div class="a cell" style="left:831px;top:227.2px"></div><div class="a cell" style="left:844.5px;top:227.2px"></div>
<div class="a" style="left:857px;top:227.2px;width:3.5px;height:11px;background:#4a72e2"></div>
<div class="a" style="left:865px;top:225.8px;width:117px;height:15.67px;background:#fff"></div>
<div class="a" style="left:901px;top:240.8px;width:81px;height:1px;background:#d6d6d6"></div>
<svg class="a" style="left:901px;top:227.2px" width="14" height="14" viewBox="-0.5 -0.5 14 14"><rect x="0" y="0" width="13" height="13" fill="#fff"/><path d="M2,12 C2,7 6,3 11,2 C11,7 7,11 2,12 Z" fill="#e02020"/><rect x="0" y="0" width="13" height="13" fill="none" stroke="#555" stroke-width="1.1"/></svg>
<div class="a" style="left:918px;top:226.2px;font-size:12px;color:#222;white-space:nowrap"><span class="fit" style="--w:32px"><路径></span></div>
<svg class="a" style="left:962px;top:228.6px" width="10" height="10"><circle cx="5" cy="5" r="3.4" fill="none" stroke="#5a5a5a" stroke-width="1.3"/></svg>
<div class="a cell" style="left:831px;top:242.9px"></div><div class="a cell" style="left:844.5px;top:242.9px"></div>
<div class="a" style="left:857px;top:242.9px;width:3.5px;height:11px;background:#4a72e2"></div>
<div class="a" style="left:865px;top:241.4px;width:117px;height:15.67px;background:#fff"></div>
<div class="a" style="left:901px;top:256.4px;width:81px;height:1px;background:#d6d6d6"></div>
<svg class="a" style="left:901px;top:242.9px" width="14" height="14" viewBox="-0.5 -0.5 14 14"><rect x="0" y="0" width="13" height="13" fill="#fff"/><rect x="5" y="2" width="3" height="10" fill="#8a8a20"/><rect x="0" y="0" width="13" height="13" fill="none" stroke="#555" stroke-width="1.1"/></svg>
<div class="a" style="left:918px;top:241.9px;font-size:12px;color:#222;white-space:nowrap"><span class="fit" style="--w:32px"><路径></span></div>
<svg class="a" style="left:962px;top:244.2px" width="10" height="10"><circle cx="5" cy="5" r="3.4" fill="none" stroke="#5a5a5a" stroke-width="1.3"/></svg>
<div class="a cell" style="left:831px;top:258.6px"></div><div class="a cell" style="left:844.5px;top:258.6px"></div>
<svg class="a" style="left:831px;top:260.1px" width="12" height="10" viewBox="0 0 12 10"><path d="M0.5,5 C2.5,2 9,1 11.5,4 C10,8 4,9 0.5,5 Z" fill="#333"/><ellipse cx="6.5" cy="4.5" rx="2.8" ry="2.4" fill="#111"/><ellipse cx="4.2" cy="3.8" rx="1.2" ry="0.8" fill="#bbb"/></svg>
<div class="a" style="left:857px;top:258.6px;width:3.5px;height:11px;background:#4a72e2"></div>
<div class="a" style="left:865px;top:257.1px;width:117px;height:15.67px;background:#fff"></div>
<div class="a" style="left:885px;top:272.1px;width:97px;height:1px;background:#d6d6d6"></div>
<svg class="a" style="left:889px;top:258.6px" width="14" height="14" viewBox="-0.5 -0.5 14 14"><rect x="0" y="0" width="13" height="13" fill="#fff"/><rect x="0" y="5" width="13" height="3" fill="#e88a20"/><rect x="0" y="0" width="13" height="13" fill="none" stroke="#555" stroke-width="1.1"/></svg>
<div class="a" style="left:906px;top:257.6px;font-size:12px;color:#222;white-space:nowrap"><span class="fit" style="--w:32px"><路径></span></div>
<svg class="a" style="left:962px;top:259.9px" width="10" height="10"><circle cx="5" cy="5" r="3.4" fill="none" stroke="#5a5a5a" stroke-width="1.3"/></svg>
<div class="a cell" style="left:831px;top:274.3px"></div><div class="a cell" style="left:844.5px;top:274.3px"></div>
<svg class="a" style="left:831px;top:275.8px" width="12" height="10" viewBox="0 0 12 10"><path d="M0.5,5 C2.5,2 9,1 11.5,4 C10,8 4,9 0.5,5 Z" fill="#333"/><ellipse cx="6.5" cy="4.5" rx="2.8" ry="2.4" fill="#111"/><ellipse cx="4.2" cy="3.8" rx="1.2" ry="0.8" fill="#bbb"/></svg>
<div class="a" style="left:857px;top:274.3px;width:3.5px;height:11px;background:#4a72e2"></div>
<div class="a" style="left:865px;top:272.8px;width:117px;height:15.67px;background:#fff"></div>
<div class="a" style="left:885px;top:287.8px;width:97px;height:1px;background:#d6d6d6"></div>
<svg class="a" style="left:889px;top:274.3px" width="14" height="14" viewBox="-0.5 -0.5 14 14"><rect x="0" y="0" width="13" height="13" fill="#fff"/><path d="M1,5 C3,2 6,1 9,1.5 L12,3 L12,12 Z" fill="#a83a22"/><rect x="0" y="0" width="13" height="13" fill="none" stroke="#555" stroke-width="1.1"/></svg>
<div class="a" style="left:906px;top:273.3px;font-size:12px;color:#222;white-space:nowrap"><span class="fit" style="--w:32px"><路径></span></div>
<svg class="a" style="left:962px;top:275.6px" width="10" height="10"><circle cx="5" cy="5" r="3.4" fill="none" stroke="#5a5a5a" stroke-width="1.3"/></svg>
<div class="a cell" style="left:831px;top:289.9px"></div><div class="a cell" style="left:844.5px;top:289.9px"></div>
<div class="a" style="left:857px;top:289.9px;width:3.5px;height:11px;background:#4a72e2"></div>
<div class="a" style="left:865px;top:288.4px;width:117px;height:15.67px;background:#fff"></div>
<div class="a" style="left:885px;top:303.4px;width:97px;height:1px;background:#d6d6d6"></div>
<svg class="a" style="left:889px;top:289.9px" width="14" height="14" viewBox="-0.5 -0.5 14 14"><rect x="0" y="0" width="13" height="13" fill="#fff"/><rect x="1" y="1" width="11" height="11" fill="#fff6e8" stroke="#e8a050" stroke-width="1.6"/><rect x="0" y="0" width="13" height="13" fill="none" stroke="#555" stroke-width="1.1"/></svg>
<div class="a" style="left:906px;top:288.9px;font-size:12px;color:#222;white-space:nowrap"><span class="fit" style="--w:50px"><复合路径></span></div>
<svg class="a" style="left:962px;top:291.2px" width="10" height="10"><circle cx="5" cy="5" r="3.4" fill="none" stroke="#5a5a5a" stroke-width="1.3"/></svg>
<div class="a cell" style="left:831px;top:305.6px"></div><div class="a cell" style="left:844.5px;top:305.6px"></div>
<svg class="a" style="left:831px;top:307.1px" width="12" height="10" viewBox="0 0 12 10"><path d="M0.5,5 C2.5,2 9,1 11.5,4 C10,8 4,9 0.5,5 Z" fill="#333"/><ellipse cx="6.5" cy="4.5" rx="2.8" ry="2.4" fill="#111"/><ellipse cx="4.2" cy="3.8" rx="1.2" ry="0.8" fill="#bbb"/></svg>
<div class="a" style="left:857px;top:305.6px;width:3.5px;height:11px;background:#4a72e2"></div>
<div class="a" style="left:865px;top:304.1px;width:117px;height:15.67px;background:#fff"></div>
<div class="a" style="left:885px;top:319.1px;width:97px;height:1px;background:#d6d6d6"></div>
<svg class="a" style="left:889px;top:305.6px" width="14" height="14" viewBox="-0.5 -0.5 14 14"><rect x="0" y="0" width="13" height="13" fill="#fff"/><rect x="0" y="5.5" width="13" height="2" fill="#7a2a1a"/><rect x="0" y="0" width="13" height="13" fill="none" stroke="#555" stroke-width="1.1"/></svg>
<div class="a" style="left:906px;top:304.6px;font-size:12px;color:#222;white-space:nowrap"><span class="fit" style="--w:32px"><路径></span></div>
<svg class="a" style="left:962px;top:306.9px" width="10" height="10"><circle cx="5" cy="5" r="3.4" fill="none" stroke="#5a5a5a" stroke-width="1.3"/></svg>
<div class="a cell" style="left:831px;top:321.3px"></div><div class="a cell" style="left:844.5px;top:321.3px"></div>
<svg class="a" style="left:831px;top:322.8px" width="12" height="10" viewBox="0 0 12 10"><path d="M0.5,5 C2.5,2 9,1 11.5,4 C10,8 4,9 0.5,5 Z" fill="#333"/><ellipse cx="6.5" cy="4.5" rx="2.8" ry="2.4" fill="#111"/><ellipse cx="4.2" cy="3.8" rx="1.2" ry="0.8" fill="#bbb"/></svg>
<div class="a" style="left:857px;top:321.3px;width:3.5px;height:11px;background:#4a72e2"></div>
<div class="a" style="left:865px;top:319.8px;width:117px;height:15.67px;background:#fff"></div>
<div class="a" style="left:885px;top:334.8px;width:97px;height:1px;background:#d6d6d6"></div>
<svg class="a" style="left:889px;top:321.3px" width="14" height="14" viewBox="-0.5 -0.5 14 14"><rect x="0" y="0" width="13" height="13" fill="#fff"/><rect x="0" y="5" width="13" height="3" fill="#e8901c"/><rect x="0" y="0" width="13" height="13" fill="none" stroke="#555" stroke-width="1.1"/></svg>
<div class="a" style="left:906px;top:320.3px;font-size:12px;color:#222;white-space:nowrap"><span class="fit" style="--w:32px"><路径></span></div>
<svg class="a" style="left:962px;top:322.6px" width="10" height="10"><circle cx="5" cy="5" r="3.4" fill="none" stroke="#5a5a5a" stroke-width="1.3"/></svg>
 <div class="a" style="left:828px;top:334.6px;width:154px;height:1.5px;background:#444"></div>
 <!-- scrollbar -->
 <div class="a" style="left:982px;top:146px;width:14px;height:343px;background:#efefef"></div>
 <div class="a" style="left:985px;top:153px;width:6px;height:6px;border-left:1.5px solid #aaa;border-top:1.5px solid #aaa;transform:rotate(45deg)"></div>
 
 <!-- bottom bar -->
 <div class="a" style="left:827.5px;top:489px;width:168px;height:14px;background:#d9d9d9;border-top:1px solid #bbb"></div>
 <div class="a" style="left:836px;top:489px;font-size:11px;color:#222;white-space:nowrap"><span class="fit" style="--w:36px">1 个图层</span></div>
 <svg class="a" style="left:890px;top:491px" width="90" height="11" viewBox="0 0 90 11">
  <circle cx="7" cy="5.5" r="3.8" fill="#fff" stroke="#333" stroke-width="1.2"/><path d="M7,5.5 L3,3" stroke="#333" stroke-width="1.5"/>
  <path d="M25,5 L30,5 M28,3 L30,5 L28,7" stroke="#333" stroke-width="1.2" fill="none"/><rect x="31" y="3" width="5" height="6" fill="#fff" stroke="#333"/>
  <rect x="52" y="2" width="7" height="7" fill="#fff" stroke="#333" stroke-width="1.2"/>
  <path d="M74,3 L80,3 M75,3 L75,9 L79,9 L79,3" stroke="#555" fill="#eee"/>
 </svg>
</div>
<div id="rstrip" class="a"></div>
<script>
(function(){
 var t=document.createElement('span');t.style.cssText='position:absolute;left:-999px;top:0;font-size:100px;white-space:nowrap';t.textContent='\u672a\u9009';document.body.appendChild(t);
 if(t.getBoundingClientRect().width<160)document.documentElement.className+=' tofu';
 document.body.removeChild(t);
})();
(function(){
 var re=/[\u2e80-\u9fff\uff00-\uffef]/;
 var w=document.createTreeWalker(document.body,NodeFilter.SHOW_TEXT,null);
 var nodes=[];while(w.nextNode())nodes.push(w.currentNode);
 nodes.forEach(function(t){
  var p=t.parentNode; if(!p||p.closest('svg,script,style'))return;
  var v=t.nodeValue; if(!re.test(v))return;
  var f=document.createDocumentFragment(), buf='';
  for(var i=0;i<v.length;i++){var c=v[i];
   if(re.test(c)){ if(buf){f.appendChild(document.createTextNode(buf));buf='';}
     var sp=document.createElement('span');sp.className='cj';sp.textContent=c;f.appendChild(sp);}
   else buf+=c;}
  if(buf)f.appendChild(document.createTextNode(buf));
  p.replaceChild(f,t);
 });
})();
document.querySelectorAll('.fit').forEach(function(e){
 var w=parseFloat(getComputedStyle(e).getPropertyValue('--w'));
 e.style.display='inline-block';e.style.whiteSpace='nowrap';e.style.transformOrigin='0 50%';
 var n=e.getBoundingClientRect().width;
 if(n>0&&w>0)e.style.transform='scaleX('+(w/n)+')';
});
</script>
</body></html>
